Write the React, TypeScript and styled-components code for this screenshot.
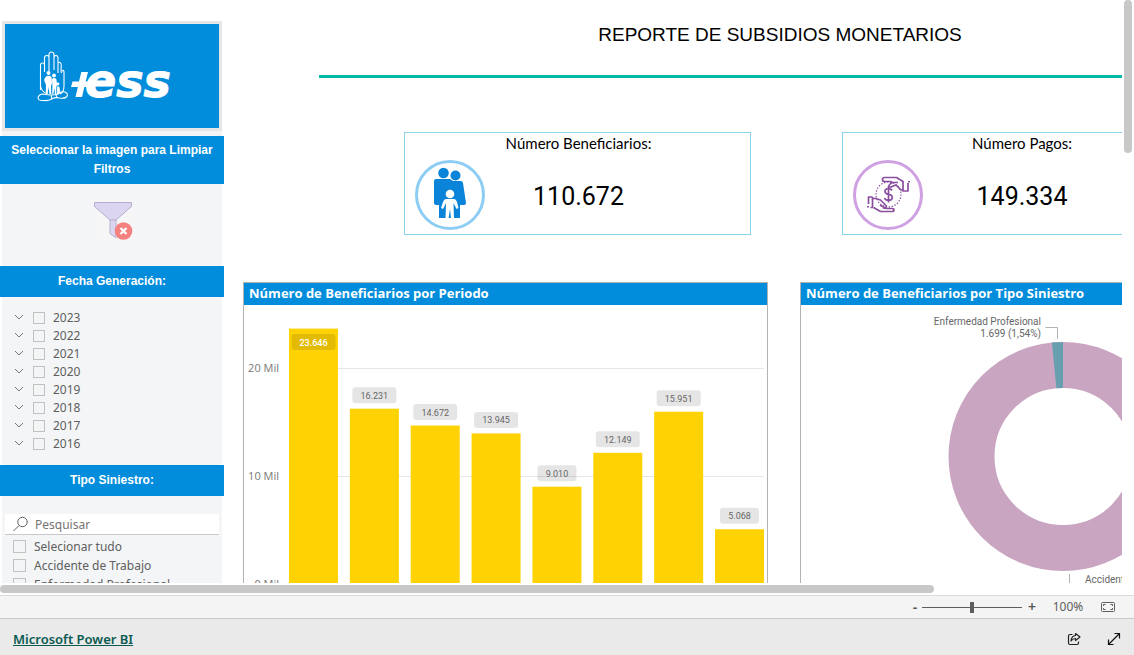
import React from "react";
import styled, { createGlobalStyle } from "styled-components";

const uiFont = `"Noto Sans", "Open Sans", sans-serif`;
const dinFont = `Roboto, "Liberation Sans", sans-serif`;
const blue = "#018ddc";

const GlobalStyle = createGlobalStyle`
  * { box-sizing: border-box; }
  body { margin: 0; background: #fff; font-family: ${uiFont}; color: #605e5c; }
`;

const Page = styled.div`
  display: flex;
  flex-direction: column;
  height: 100vh;
  overflow: hidden;
`;

const Viewport = styled.div`
  flex: 1;
  min-height: 0;
  display: grid;
  grid-template-columns: minmax(0, 1fr) 12px;
  grid-template-rows: minmax(0, 1fr) 12px;
`;

const ReportWindow = styled.div`
  overflow: hidden;
`;

const ReportCanvas = styled.div`
  display: flex;
  width: calc(100% + 224px);
`;

const VerticalTrack = styled.div`
  padding: 0 2px;
`;

const HorizontalTrack = styled.div`
  grid-column: 1;
  padding: 2px 0;
`;

const Thumb = styled.div<{ $vertical?: boolean }>`
  background: #c8c8c8;
  border-radius: 4px;
  width: ${(p) => (p.$vertical ? "8px" : "83.2%")};
  height: ${(p) => (p.$vertical ? "26.2%" : "8px")};
`;

/* ---------- sidebar ---------- */

const Sidebar = styled.aside`
  flex: 0 0 224px;
  padding-top: 21px;
`;

const LogoFrame = styled.div`
  height: 110px;
  margin: 0 2px;
  border: 3px solid #e6e6e6;
  background: ${blue};
`;

const SidebarHeading = styled.h2`
  display: flex;
  align-items: center;
  justify-content: center;
  min-height: 31px;
  margin: 0;
  padding: 5px 8px;
  background: ${blue};
  color: #fff;
  font: bold 12px/19px "Liberation Sans", Arial, sans-serif;
  text-align: center;
`;

const SidebarSection = styled.div<{ $height: number; $top?: number }>`
  height: ${(p) => p.$height}px;
  margin: 0 2px;
  padding-top: ${(p) => p.$top ?? 0}px;
  background: #f3f5f7;
`;

const ClearButton = styled.button`
  display: block;
  height: 40px;
  margin: 0 auto;
  padding: 0;
  border: 0;
  background: none;
`;

const List = styled.ul`
  margin: 0;
  padding: 0;
  list-style: none;
`;

const YearRow = styled.li`
  display: flex;
  align-items: center;
  height: 18px;
  padding-left: 12px;
`;

const ExpandButton = styled.button`
  display: flex;
  width: 10px;
  height: 12px;
  margin-right: 9px;
  padding: 0;
  border: 0;
  background: none;
`;

const OptionLabel = styled.label`
  display: flex;
  align-items: center;
  gap: 8px;
  font-size: 12px;
  line-height: 18px;
  color: #605e5c;
`;

const Checkbox = styled.input.attrs({ type: "checkbox" })<{ $size?: number }>`
  appearance: none;
  width: ${(p) => p.$size ?? 12}px;
  height: ${(p) => p.$size ?? 12}px;
  margin: 0;
  border: 1px solid #c2c2c0;
`;

const SearchBox = styled.label`
  display: flex;
  align-items: center;
  gap: 6px;
  height: 21px;
  margin: 0 3px 2px;
  padding-left: 8px;
  border-bottom: 1px solid #c8c8c8;
  background: #fff;
`;

const SearchInput = styled.input`
  flex: 1;
  min-width: 0;
  padding: 2px 0 0;
  border: 0;
  outline: 0;
  background: none;
  font: 12px/18px ${uiFont};
  color: #605e5c;
  &::placeholder { color: #767472; opacity: 1; }
`;

const TypeRow = styled.li`
  display: flex;
  align-items: center;
  height: 19px;
  padding-left: 11px;
`;

/* ---------- report body ---------- */

const Main = styled.main`
  flex: 1;
  min-width: 0;
`;

const TitleBlock = styled.header`
  height: 78px;
  margin: 0 105px 54px 95px;
  padding-top: 22px;
  border-bottom: 3px solid #00b8aa;
`;

const Title = styled.h1`
  margin: 0;
  font: 19px/26px "Liberation Sans", Arial, sans-serif;
  color: #000;
  text-align: center;
`;

const KpiRow = styled.div`
  display: grid;
  grid-template-columns: 347fr 358fr;
  gap: 91px;
  margin: 0 146px 47px 180px;
`;

const KpiCard = styled.section`
  height: 103px;
  border: 1px solid #8ad4eb;
  color: #000;
`;

const KpiLabel = styled.h2`
  margin: 0;
  padding-left: 2px;
  font: 15px/20px Lato, "Open Sans", sans-serif;
  text-align: center;
`;

const KpiBody = styled.div`
  display: grid;
  grid-template-columns: 70px 1fr 68px;
  align-items: center;
  padding: 7px 10px 0;
`;

const KpiValue = styled.div`
  padding-top: 3px;
  font: 25px/30px ${dinFont};
  text-align: center;
`;

const PanelRow = styled.div`
  display: grid;
  grid-template-columns: 1fr 1fr;
  gap: 32px;
  padding: 0 21px 0 19px;
`;

const Panel = styled.section`
  height: 340px;
  border: 1px solid #b3b3b3;
`;

const PanelTitle = styled.h2`
  margin: 0;
  padding: 0 5px 2px;
  background: ${blue};
  color: #fff;
  font: 700 13px/20px "Open Sans", "Noto Sans", sans-serif;
`;

const Chart = styled.svg`
  display: block;
  margin: 0 auto;
`;

const AxisText = styled.text`
  font: 11px "Open Sans", "Noto Sans", sans-serif;
  fill: #777;
`;

const DataText = styled.text<{ $light?: boolean; $size?: number }>`
  font: ${(p) => (p.$light ? 500 : 400)} ${(p) => p.$size ?? 10}px ${dinFont};
  fill: ${(p) => (p.$light ? "#fff" : "#666")};
`;

/* ---------- bottom bars ---------- */

const StatusBar = styled.div`
  display: flex;
  align-items: center;
  justify-content: flex-end;
  height: 24px;
  padding-right: 19px;
  border-top: 1px solid #dcdcdc;
  border-bottom: 1px solid #c8c8c8;
  background: #f4f4f4;
`;

const ZoomButton = styled.button<{ $width: number }>`
  width: ${(p) => p.$width}px;
  height: 20px;
  padding: 0;
  border: 0;
  background: none;
  font: 600 14px/18px ${uiFont};
  color: #555;
`;

const ZoomSlider = styled.input.attrs({ type: "range" })`
  appearance: none;
  width: 100px;
  height: 11px;
  margin: 0;
  background: linear-gradient(#605e5c, #605e5c) center / 100% 1px no-repeat;
  &::-webkit-slider-thumb {
    appearance: none;
    width: 4px;
    height: 11px;
    background: #605e5c;
  }
`;

const ZoomValue = styled.output`
  width: 48px;
  margin: 0 9px 0 2px;
  font-size: 12px;
  line-height: 18px;
  text-align: center;
`;

const IconButton = styled.button`
  display: flex;
  padding: 0;
  border: 0;
  background: none;
`;

const Footer = styled.footer`
  display: flex;
  align-items: center;
  height: 36px;
  padding: 3px 13px 0;
  background: #eaeaea;
`;

const BrandLink = styled.a`
  margin-right: auto;
  font: 600 13px/20px ${uiFont};
  color: #0b5a52;
`;

const FooterActions = styled.div`
  display: flex;
  gap: 26px;
`;

/* ---------- drawings ---------- */

const Logo = () => (
  <svg width="214" height="104" viewBox="5 24 214 104" role="img" aria-label="IESS">
    <g fill="none" stroke="#fff" strokeWidth="1.1" strokeLinejoin="round">
      <path d="M40.500 90V65q0-2 2-2t2 2v-7q0-2.500 2.300-2.500T49 58v-3q0-3 2.500-3T54 55v3q0-2.500 2-2.500t2 2.500v6q0-2 2-1.500 1.500.5 1.200 3l-.2 6M44.500 64v8M49 57v14M54 57v13M58 62v11" />
      <path d="M61 73q2.500-5 3-1v14q0 6-4 8M40.500 86q1 5 5 7" />
      <path d="M38 98q1-4 5-4 5 1 9 1 5 0 9-3 6-1 6.500 3-1 4-8 3-4-1-8 1-3 2-8 1.500-5 .5-5.500-2.500z" />
      <path d="M51 95l1 4M56 95l1 3" />
    </g>
    <g fill="#fff">
      <circle cx="48.500" cy="73" r="2" />
      <circle cx="54" cy="75.500" r="1.900" />
      <circle cx="58" cy="84" r="1.400" />
      <path d="M45.500 77q3-2.500 6 0l.5 6-1 3 .3 8h-1.800l-1-7-.8 7h-2l.3-9-2-5z" />
      <path d="M52 79q2-2 4.300 0l1 6-1 2v7h-1.300l-.8-6-.7 6h-1.300l.2-8z" />
      <path d="M57 86.500h2.300l.7 4-1 4h-1.800z" />
    </g>
    <path fill="#fff" d="M72.500 81.500H79L81.300 72H88l-2.300 9.500h5l-1.500 5.500h-4.800L82 97h-6.500l2.400-10H71z" />
    <text x="85" y="96.500" fill="#fff" stroke="#fff" strokeWidth="1" fontFamily="DejaVu Sans" fontWeight="bold" fontStyle="italic" fontSize="46">ess</text>
  </svg>
);

const FilterIcon = () => (
  <svg width="44" height="40" viewBox="-4 0 44 40" aria-hidden="true">
    <path d="M0 2h38v38H0z" fill="#f6f6f6" />
    <path d="M.5 2.500h37v4L22 20v18l-6-4.500V20L.5 6.500z" fill="#dbd5ef" stroke="#b6add0" />
    <path d="M15.500 20h7" stroke="#b6add0" />
    <circle cx="29.500" cy="31" r="8.800" fill="#f48080" />
    <path d="M26.500 28l6 6m0-6l-6 6" stroke="#fff" strokeWidth="2.200" />
  </svg>
);

const FamilyIcon = () => (
  <svg width="70" height="70" viewBox="0 0 70 70" aria-hidden="true">
    <circle cx="35" cy="35" r="33.500" fill="#fff" stroke="#8dcdf4" strokeWidth="3" />
    <g fill="#0a84d8">
      <circle cx="28.500" cy="13" r="5.300" />
      <circle cx="40.500" cy="15.500" r="5" />
      <path d="M21 19h14l3 2h8q1.500 0 2 2l3 20q0 2-2 2h-4v13H24V45h-3q-2 0-2-2V21q0-2 2-2z" />
    </g>
    <g fill="#fff">
      <circle cx="35" cy="34" r="4.300" />
      <path d="M31 39h8q2 0 3 3l1.500 6-2 1-3-6 .5 15.500h-3L35 49l-1.500 9.500h-3L31 43l-3 6-2-1 2-6q1-3 3-3z" />
    </g>
  </svg>
);

const PaymentIcon = () => (
  <svg width="70" height="70" viewBox="0 0 70 70" aria-hidden="true">
    <circle cx="35" cy="35" r="33.500" fill="#fff" stroke="#cfa0e2" strokeWidth="3" />
    <g fill="none" stroke="#8a4f9e" strokeWidth="1.700" strokeLinejoin="round">
      <circle cx="35.500" cy="34.500" r="12.500" strokeDasharray="1.300 1.700" strokeWidth="1.300" />
      <path d="M39 30.500q-1-2-3.500-2-3.500 0-3.500 2.800 0 2.500 3.500 3 3.800.6 3.800 3.200 0 2.800-3.800 2.800-3 0-4-2.200M35.500 26v16.500" />
      <path d="M50 21.500l-6.500-4H31.500q-2 0-2 2t2 2h6l2 1q-4 2-3.500 4 1 1 3 0l4-1.500 5 5h2.500M40 22.500h5" />
      <path d="M50 21v10h5V23" />
      <path d="M20 38.500h2.500l5 1.500 5 5q2 2-.5 3l-5-3m3 3l4 .5h5q2 0 2 1.500t-2 1.500H27.500l-7-4" />
      <path d="M19.500 37h-4v7M19.500 37v10.500h-2" />
    </g>
    <g fill="#8a4f9e">
      <rect x="55" y="21" width="2" height="1.500" />
      <rect x="14" y="46" width="2" height="1.500" />
    </g>
  </svg>
);

/* ---------- charts ---------- */

const bars = [
  { label: "23.646", value: 23646 },
  { label: "16.231", value: 16231 },
  { label: "14.672", value: 14672 },
  { label: "13.945", value: 13945 },
  { label: "9.010", value: 9010 },
  { label: "12.149", value: 12149 },
  { label: "15.951", value: 15951 },
  { label: "5.068", value: 5068 },
];

const BASELINE = 279;
const yOf = (v: number) => BASELINE - (v / 10000) * 108;

const BarChart = () => (
  <Chart width="523" height="316" viewBox="0 0 523 316" role="img" aria-label="Número de Beneficiarios por Periodo">
    {[0, 10000, 20000].map((v) => (
      <g key={v}>
        <rect x="45" y={yOf(v)} width="475" height="1" fill="#e6e6e6" />
        <AxisText x="35" y={yOf(v) + 4} textAnchor="end">{v / 1000} Mil</AxisText>
      </g>
    ))}
    {bars.map((bar, i) => {
      const x = 45 + i * 60.86;
      const top = yOf(bar.value);
      const inside = i === 0;
      const width = bar.label.length > 5 ? 44 : 39;
      const middle = inside ? top + 13.5 : top - 13.5;
      return (
        <g key={bar.label}>
          <rect x={x} y={top} width="49" height={BASELINE - top} fill="#ffd204" />
          <rect x={x + 24.5 - width / 2} y={middle - 8} width={width} height="16" rx="3" fill={inside ? "#e3bb04" : "#000"} fillOpacity={inside ? 1 : 0.1} />
          <DataText $light={inside} $size={9} x={x + 24.5} y={middle + 3.5} textAnchor="middle">{bar.label}</DataText>
        </g>
      );
    })}
  </Chart>
);

const CX = 262;
const CY = 151.5;
const R = 114.5;
const INNER = 68.5;
const sliceAngle = -0.0154 * 2 * Math.PI;
const at = (r: number) => `${CX + r * Math.sin(sliceAngle)} ${CY - r * Math.cos(sliceAngle)}`;

const DonutChart = () => (
  <Chart width="523" height="316" viewBox="0 0 523 316" role="img" aria-label="Número de Beneficiarios por Tipo Siniestro">
    <circle cx={CX} cy={CY} r={(R + INNER) / 2} fill="none" stroke="#c9a5c1" strokeWidth={R - INNER} />
    <path d={`M${CX} ${CY - R}A${R} ${R} 0 0 0 ${at(R)}L${at(INNER)}A${INNER} ${INNER} 0 0 1 ${CX} ${CY - INNER}z`} fill="#689fb0" />
    <path d="M244.500 22.500H256.500V34M268.500 269v9" fill="none" stroke="#b3b3b3" />
    <DataText x="240" y="20" textAnchor="end">Enfermedad Profesional</DataText>
    <DataText x="240" y="32" textAnchor="end">1.699 (1,54%)</DataText>
    <DataText x="284" y="278">Accidente de Trabajo</DataText>
  </Chart>
);

const years = [2023, 2022, 2021, 2020, 2019, 2018, 2017, 2016];
const claimTypes = ["Selecionar tudo", "Accidente de Trabajo", "Enfermedad Profesional"];

export default function App() {
  return (
    <Page>
      <GlobalStyle />
      <Viewport>
        <ReportWindow>
          <ReportCanvas>
            <Sidebar>
              <LogoFrame><Logo /></LogoFrame>
              <SidebarSection $height={5} />
              <SidebarHeading>Seleccionar la imagen para Limpiar Filtros</SidebarHeading>
              <SidebarSection $height={82} $top={16}>
                <ClearButton aria-label="Limpiar filtros"><FilterIcon /></ClearButton>
              </SidebarSection>
              <SidebarHeading>Fecha Generación:</SidebarHeading>
              <SidebarSection $height={168} $top={12}>
                <List>
                  {years.map((year) => (
                    <YearRow key={year}>
                      <ExpandButton aria-label={`Expandir ${year}`}>
                        <svg width="10" height="10" viewBox="0 0 10 10" fill="none" stroke="#777">
                          <path d="M1 3l4 4 4-4" />
                        </svg>
                      </ExpandButton>
                      <OptionLabel><Checkbox />{year}</OptionLabel>
                    </YearRow>
                  ))}
                </List>
              </SidebarSection>
              <SidebarHeading>Tipo Siniestro:</SidebarHeading>
              <SidebarSection $height={140} $top={18}>
                <SearchBox>
                  <svg width="16" height="16" viewBox="0 0 16 16" fill="none" stroke="#605e5c" aria-hidden="true">
                    <circle cx="9.500" cy="6" r="4.700" />
                    <path d="M6 9.500L.5 15" />
                  </svg>
                  <SearchInput placeholder="Pesquisar" aria-label="Pesquisar" />
                </SearchBox>
                <List>
                  {claimTypes.map((name) => (
                    <TypeRow key={name}>
                      <OptionLabel><Checkbox $size={13} />{name}</OptionLabel>
                    </TypeRow>
                  ))}
                </List>
              </SidebarSection>
            </Sidebar>
            <Main>
              <TitleBlock><Title>REPORTE DE SUBSIDIOS MONETARIOS</Title></TitleBlock>
              <KpiRow>
                <KpiCard>
                  <KpiLabel>Número Beneficiarios:</KpiLabel>
                  <KpiBody><FamilyIcon /><KpiValue>110.672</KpiValue></KpiBody>
                </KpiCard>
                <KpiCard>
                  <KpiLabel>Número Pagos:</KpiLabel>
                  <KpiBody><PaymentIcon /><KpiValue>149.334</KpiValue></KpiBody>
                </KpiCard>
              </KpiRow>
              <PanelRow>
                <Panel>
                  <PanelTitle>Número de Beneficiarios por Periodo</PanelTitle>
                  <BarChart />
                </Panel>
                <Panel>
                  <PanelTitle>Número de Beneficiarios por Tipo Siniestro</PanelTitle>
                  <DonutChart />
                </Panel>
              </PanelRow>
            </Main>
          </ReportCanvas>
        </ReportWindow>
        <VerticalTrack><Thumb $vertical /></VerticalTrack>
        <HorizontalTrack><Thumb /></HorizontalTrack>
      </Viewport>
      <StatusBar>
        <ZoomButton $width={14} aria-label="Reducir">-</ZoomButton>
        <ZoomSlider aria-label="Zoom" min={0} max={200} defaultValue={100} />
        <ZoomButton $width={20} aria-label="Ampliar">+</ZoomButton>
        <ZoomValue>100%</ZoomValue>
        <IconButton aria-label="Ajustar a la página">
          <svg width="14" height="12" viewBox="0 0 14 12" fill="none" stroke="#605e5c">
            <rect x=".5" y="1.500" width="13" height="9" rx="1" />
            <path d="M4.500 3.500h-2v1.500M9.500 3.500h2v1.500M4.500 8.500h-2V7M9.500 8.500h2V7" />
          </svg>
        </IconButton>
      </StatusBar>
      <Footer>
        <BrandLink href="#powerbi">Microsoft Power BI</BrandLink>
        <FooterActions>
          <IconButton aria-label="Compartir">
            <svg width="14" height="14" viewBox="0 0 14 14" fill="none" stroke="#222" strokeWidth="1.200" strokeLinejoin="round">
              <path d="M5.500 2.500H3q-1.500 0-1.500 1.500v7q0 1.500 1.500 1.500h7q1.500 0 1.500-1.500V9.500" />
              <path d="M8.500 1.500L13 5 8.500 8.500v-2Q6 6.500 4 9q.5-5 4.500-5.500z" />
            </svg>
          </IconButton>
          <IconButton aria-label="Pantalla completa">
            <svg width="14" height="14" viewBox="0 0 14 14" fill="none" stroke="#111" strokeWidth="1.200">
              <path d="M1.500 12.500l11-11M7.500 1.500h5v5M1.500 7.500v5h5" />
            </svg>
          </IconButton>
        </FooterActions>
      </Footer>
    </Page>
  );
}
